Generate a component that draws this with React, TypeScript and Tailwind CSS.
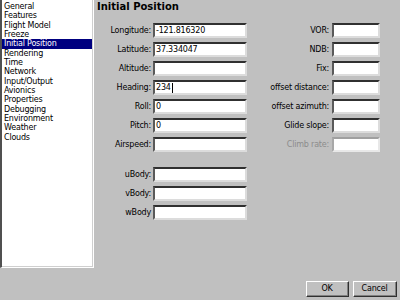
import React from "react";

const items = [
  "General",
  "Features",
  "Flight Model",
  "Freeze",
  "Initial Position",
  "Rendering",
  "Time",
  "Network",
  "Input/Output",
  "Avionics",
  "Properties",
  "Debugging",
  "Environment",
  "Weather",
  "Clouds",
];

function Field({ value, cursor, disabled, w }: { value?: string; cursor?: boolean; disabled?: boolean; w: string }) {
  return (
    <div
      className={`${w} h-[15px] bg-white border-2 flex items-center pl-[1px] leading-none ${
        disabled
          ? "border-t-[#a0a0a0] border-l-[#a8a8a8] border-b-[#e8e8e8] border-r-[#e8e8e8]"
          : "border-t-[#303030] border-l-[#5a5a5a] border-b-[#dcdcdc] border-r-[#dcdcdc]"
      }`}
    >
      <span>{value}</span>
      {cursor && <span className="w-[1px] h-[10px] bg-black ml-[1px]" />}
    </div>
  );
}

function Row({ label, value, cursor, rlabel, rdisabled }: { label: string; value?: string; cursor?: boolean; rlabel?: string; rdisabled?: boolean }) {
  return (
    <div className="flex items-center h-[15px]">
      <div className="w-[55px] text-right whitespace-nowrap">{label}</div>
      <div className="ml-[2px]">
        <Field value={value} cursor={cursor} w="w-[94px]" />
      </div>
      {rlabel && (
        <>
          <div className={`w-[82px] text-right whitespace-nowrap ${rdisabled ? "text-[#8c8c8c]" : ""}`}>{rlabel}</div>
          <div className="ml-[3px]">
            <Field disabled={rdisabled} w="w-[48px]" />
          </div>
        </>
      )}
    </div>
  );
}

function Button({ label, w }: { label: string; w: string }) {
  return (
    <div className={`${w} h-[16px] border border-t-white border-l-white border-b-[#303030] border-r-[#303030]`}>
      <div className="h-full flex items-center justify-center border-b border-r border-b-[#808080] border-r-[#808080]">
        {label}
      </div>
    </div>
  );
}

export default function App() {
  return (
    <div
      className="w-[400px] h-[300px] bg-[#c0c0c0] relative text-[8px] text-black overflow-hidden tracking-[-0.2px]"
      style={{ fontFamily: '"DejaVu Sans", sans-serif' }}
    >
      <div className="flex">
        {/* Page list */}
        <div className="w-[94px] h-[268px] bg-white border-l-2 border-l-[#505050] border-r border-b border-r-white border-b-white">
          <div className="h-full border-r border-b border-r-[#cfcfcf] border-b-[#cfcfcf] pt-[2px]">
            {items.map((it) => (
              <div
                key={it}
                className={`h-[9.33px] leading-[9.33px] pl-[2px] whitespace-nowrap ${
                  it === "Initial Position" ? "bg-[#000080] text-white" : ""
                }`}
              >
                {it}
              </div>
            ))}
          </div>
        </div>

        {/* Form */}
        <div className="ml-[2px] flex-1">
          <div className="text-[10px] font-bold leading-none pt-[2px] pl-[1px] tracking-normal">Initial Position</div>
          <div className="flex flex-col gap-[4px] mt-[11px]">
            <Row label="Longitude:" value="-121.816320" rlabel="VOR:" />
            <Row label="Latitude:" value="37.334047" rlabel="NDB:" />
            <Row label="Altitude:" rlabel="Fix:" />
            <Row label="Heading:" value="234" cursor rlabel="offset distance:" />
            <Row label="Roll:" value="0" rlabel="offset azimuth:" />
            <Row label="Pitch:" value="0" rlabel="Glide slope:" />
            <Row label="Airspeed:" rlabel="Climb rate:" rdisabled />
          </div>
          <div className="flex flex-col gap-[4px] mt-[15px]">
            <Row label="uBody:" />
            <Row label="vBody:" />
            <Row label="wBody" />
          </div>
        </div>
      </div>

      {/* Buttons */}
      <div className="absolute left-[306px] top-[281px] flex gap-[4px]">
        <Button label="OK" w="w-[43px]" />
        <Button label="Cancel" w="w-[44px]" />
      </div>
    </div>
  );
}
